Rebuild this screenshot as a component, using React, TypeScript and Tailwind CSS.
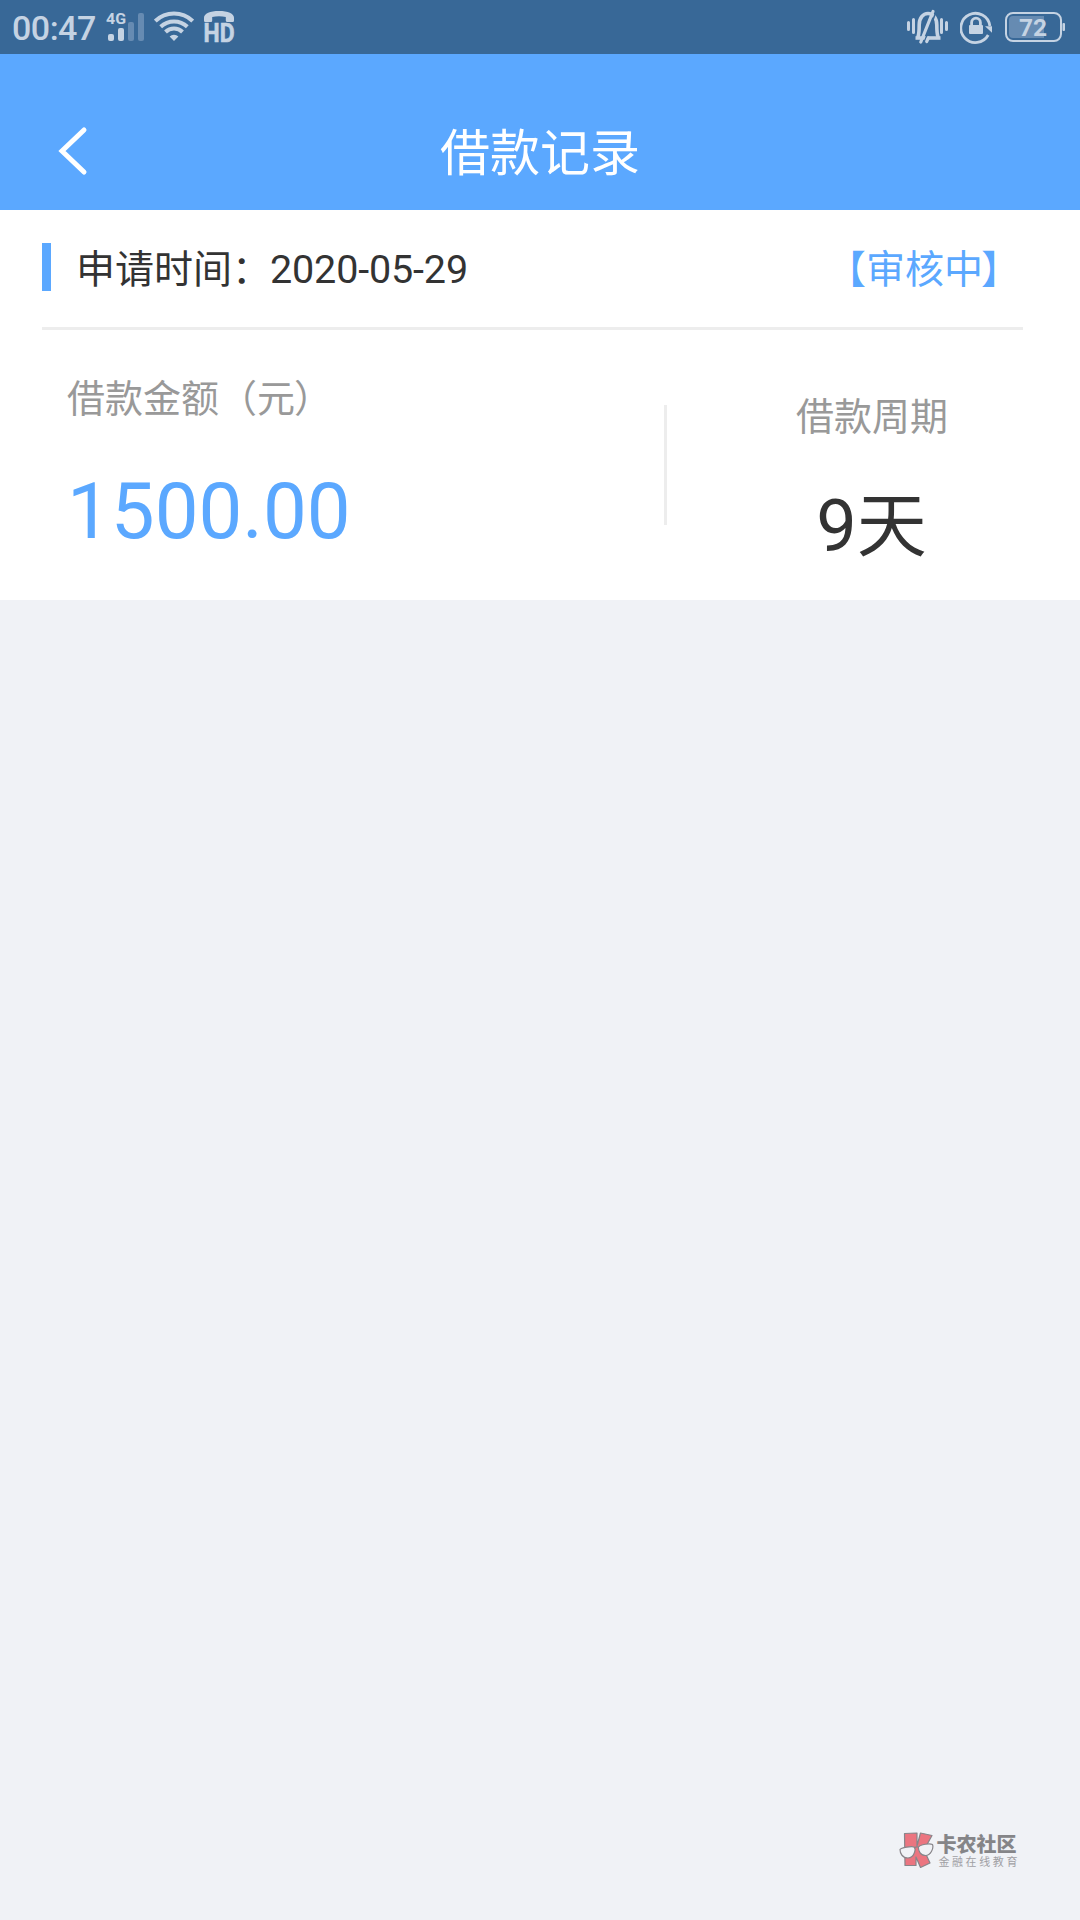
type LoanRecord = {
  appliedAt: string;
  amount: string;
  days: number;
};

const record: LoanRecord = {
  appliedAt: '2020-05-29',
  amount: '1500.00',
  days: 9,
};

function SignalIcon() {
  return (
    <svg width="40" height="54" viewBox="0 0 40 54" fill="#c5d3e3">
      <text x="0" y="24" fontSize="15.5" fontWeight="700" textLength="20" lengthAdjust="spacingAndGlyphs">
        4G
      </text>
      <rect x="2" y="34" width="6" height="7" rx="2" />
      <rect x="12" y="28" width="6" height="13" rx="2" />
      <rect x="22" y="22" width="6" height="19" rx="2" fill="#668bb2" />
      <rect x="32" y="13" width="6" height="28" rx="2" fill="#668bb2" />
    </svg>
  );
}

function WifiIcon() {
  return (
    <svg width="40" height="54" viewBox="0 0 40 54" fill="none" stroke="#c5d3e3" strokeWidth="4">
      <path d="M1.3 21a27 27 0 0 1 37.4 0" />
      <path d="M6.7 26.7a19.3 19.3 0 0 1 26.6 0" />
      <path d="M11.5 32a12.2 12.2 0 0 1 17 0" />
      <path d="M15.6 36.6 20 41l4.4-4.4a6.2 6.2 0 0 0-8.8 0z" fill="#c5d3e3" stroke="none" />
    </svg>
  );
}

function HdCallIcon() {
  return (
    <svg className="overflow-visible" width="34" height="54" viewBox="0 0 34 54" fill="#c5d3e3">
      <path d="M1 20.5v-2.7C1 13.5 7 11 16 11s15 2.5 15 6.8v2.7c0 1-.6 1.5-1.6 1.5h-5c-1 0-1.6-.6-1.6-1.5V17c-4-1-9.6-1-13.6 0v3.5c0 1-.6 1.5-1.6 1.5h-5C1.6 22 1 21.5 1 20.5z" />
      <text
        x="0.5"
        y="42"
        fontSize="26"
        fontWeight="700"
        textLength="31"
        lengthAdjust="spacingAndGlyphs"
        stroke="#c5d3e3"
        strokeWidth="0.6"
      >
        HD
      </text>
    </svg>
  );
}

function BellOffIcon() {
  return (
    <svg width="42" height="54" viewBox="0 0 42 54" fill="none" stroke="#c5d3e3" strokeLinecap="round">
      <path d="M1.5 22.5v7M6.5 19.5v13M34.5 19.5v13M39.5 22.5v7" strokeWidth="3" />
      <path d="M8.5 38h25" strokeWidth="3.6" strokeLinecap="butt" />
      <path d="M11 37c1-3 1.2-6 1.2-12 0-7 3.8-11.5 8.8-11.5s8.8 4.5 8.8 11.5c0 6 .2 9 1.2 12" strokeWidth="3.6" />
      <path d="M28.6 13 17 43" stroke="#386897" strokeWidth="1.6" strokeLinecap="butt" />
      <path d="M26 11.5 13.8 42M21.3 38l-1.600 3.500" strokeWidth="3.2" />
    </svg>
  );
}

function RotationLockIcon() {
  return (
    <svg width="32" height="54" viewBox="0 0 32 54" fill="none" stroke="#c5d3e3" strokeWidth="2.8">
      <path d="M28.2 35a14.6 14.6 0 1 1 1.7-9" />
      <path d="M25 26.2h7v6.6z" fill="#c5d3e3" stroke="none" />
      <rect x="9" y="25" width="14" height="9" rx="1" fill="#c5d3e3" stroke="none" />
      <path d="M11.6 26v-3.5a4.4 4.4 0 0 1 8.8 0V26" />
    </svg>
  );
}

function BatteryIcon() {
  return (
    <svg width="61" height="54" viewBox="0 0 61 54">
      <rect x="1" y="13" width="55" height="28" rx="7" fill="none" stroke="#c5d3e3" strokeWidth="2" />
      <path d="M8 16h31v22H8a4 4 0 0 1-4-4V20a4 4 0 0 1 4-4z" fill="#668bb2" />
      <rect x="57.5" y="23" width="2.5" height="8" rx="1" fill="#c5d3e3" />
      <text x="14" y="36" fontSize="24.5" fontWeight="700" fill="#c5d3e3">
        72
      </text>
    </svg>
  );
}

function StatusBar() {
  return (
    <div className="flex h-[54px] items-center bg-[#386897] pl-3 pr-[14px]">
      <span className="w-[94px] pt-[2px] text-[34px] font-medium leading-[54px] tracking-[-0.5px] text-[#c5d3e3]">
        00:47
      </span>
      <SignalIcon />
      <div className="ml-2">
        <WifiIcon />
      </div>
      <div className="ml-[9px]">
        <HdCallIcon />
      </div>
      <div className="ml-auto flex">
        <BellOffIcon />
        <div className="ml-[11px] mr-[13px]">
          <RotationLockIcon />
        </div>
        <BatteryIcon />
      </div>
    </div>
  );
}

function Header() {
  return (
    <header className="grid h-[156px] grid-cols-3 items-center bg-[#5ba8ff] pt-[38px] text-white">
      <button className="pl-[58px]" aria-label="返回">
        <svg width="30" height="50" viewBox="0 0 30 50" fill="none" stroke="#fff" strokeWidth="5" strokeLinecap="round">
          <path d="M26 4 4 25l22 21" />
        </svg>
      </button>
      <h1 className="pt-[6px] text-center text-[50px] leading-[60px]">借款记录</h1>
    </header>
  );
}

function RecordCard({ appliedAt, amount, days }: LoanRecord) {
  return (
    <section className="h-[390px] bg-white">
      <div className="ml-[42px] mr-[57px] flex h-[120px] items-center justify-between border-b-[3px] border-[#ededed] pb-px text-[39px] leading-[48px]">
        <div className="flex h-12 -translate-y-px items-center">
          <span className="h-12 w-[9px] bg-[#5ba8ff]" />
          <span className="ml-[25px] pt-[6px] text-[#333]">
            申请时间：<span className="-ml-px text-[39.5px] tracking-[-0.15px]">{appliedAt}</span>
          </span>
        </div>
        <span className="mr-[3px] pt-1 text-[#5ba8ff]">
          【审核中<span className="-ml-[2px]">】</span>
        </span>
      </div>
      <div className="flex h-[270px]">
        <div className="w-[664px] pl-[67px] pt-[44px]">
          <p className="h-[50px] text-[38px] leading-[50px] text-[#999]">
            借款金额（元<span className="-ml-px">）</span>
          </p>
          <p className="mt-[43px] text-[78px] leading-[90px] text-[#5ba8ff]">{amount}</p>
        </div>
        <div className="mt-[75px] h-[120px] w-[3px] bg-[#ededed]" />
        <div className="flex-1 pr-[3px] pt-[62px] text-center">
          <p className="h-[50px] text-[38px] leading-[50px] text-[#999]">借款周期</p>
          <p className="mt-10 pr-px text-[70px] leading-[90px] text-[#333]">
            <span className="text-[72px]">{days}</span>天
          </p>
        </div>
      </div>
    </section>
  );
}

function Brand() {
  return (
    <footer className="mb-[50px] mr-[60px] mt-auto flex self-end">
      <svg width="35" height="37" viewBox="0 0 35 37" stroke="#88858a" strokeWidth="1.2" strokeLinejoin="round">
        <path d="M5.5 1.5 18 1v13L21.5 1 33 3.5 25 18l6 13-9.5 4.5L17 25v8.5H6z" fill="#eb7580" />
        <path d="M1 17.5c1-2 12-3.5 14-2.5 2.5 2 0 11-6 11-5.500 0-8-4.500-8-8.500zM19.500 15c2-2.500 11-4 14-2.500 1.500 4-2 11-7 11s-7.500-5-7-8.500z" fill="#f0f2f6" />
        <path d="M15 16c1.5-1 3-1.5 4.5-1" fill="none" />
      </svg>
      <div className="ml-[2px] whitespace-nowrap pt-[3px]">
        <p className="h-[21px] text-[20px] font-black leading-[21px] text-[#858588]">卡农社区</p>
        <p className="ml-[2px] h-[14px] text-[11px] leading-[14px] tracking-[2.6px] text-[#a0a0a4]">金融在线教育</p>
      </div>
    </footer>
  );
}

export default function App() {
  return (
    <main className="flex min-h-[1920px] w-full flex-col bg-[#f0f2f6] font-[Roboto,'Noto_Sans_CJK_SC',sans-serif]">
      <StatusBar />
      <Header />
      <RecordCard {...record} />
      <Brand />
    </main>
  );
}
